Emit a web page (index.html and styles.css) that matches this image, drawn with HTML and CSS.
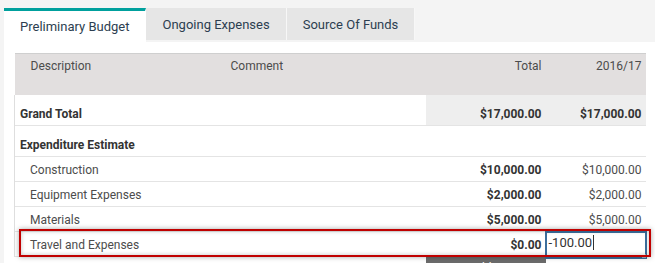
FILE: index.html
```html
<!DOCTYPE html>
<html>
<head>
<meta charset="utf-8">
<link rel="stylesheet" href="styles.css">
</head>
<body>
<div class="page">
  <div class="tabs">
    <div class="tab active">Preliminary Budget</div>
    <div class="tab">Ongoing Expenses</div>
    <div class="tab">Source Of Funds</div>
  </div>
  <div class="panel">
    <table class="grid">
      <colgroup>
        <col class="c-desc"><col class="c-comment"><col class="c-total"><col class="c-year">
      </colgroup>
      <thead>
        <tr>
          <th class="desc">Description</th>
          <th class="comment">Comment</th>
          <th class="num">Total</th>
          <th class="num">2016/17</th>
        </tr>
      </thead>
      <tbody>
        <tr class="group">
          <td class="g-label">Grand Total</td>
          <td></td>
          <td class="num shade">$17,000.00</td>
          <td class="num shade">$17,000.00</td>
        </tr>
        <tr class="group">
          <td class="g-label">Expenditure Estimate</td>
          <td></td><td></td><td></td>
        </tr>
        <tr class="line">
          <td class="l-label">Construction</td>
          <td></td>
          <td class="num bold">$10,000.00</td>
          <td class="num">$10,000.00</td>
        </tr>
        <tr class="line">
          <td class="l-label">Equipment Expenses</td>
          <td></td>
          <td class="num bold">$2,000.00</td>
          <td class="num">$2,000.00</td>
        </tr>
        <tr class="line">
          <td class="l-label">Materials</td>
          <td></td>
          <td class="num bold">$5,000.00</td>
          <td class="num">$5,000.00</td>
        </tr>
        <tr class="line editing">
          <td class="l-label">Travel and Expenses</td>
          <td></td>
          <td class="num bold">$0.00</td>
          <td class="edit-cell"><div class="input"><span>-100.00</span><i class="caret"></i><i class="grip"></i></div></td>
        </tr>
      </tbody>
      <tfoot>
        <tr>
          <td></td><td></td>
          <td class="btn-cell"><div class="btn">Add...</div></td>
          <td></td>
        </tr>
      </tfoot>
    </table>
    <div class="highlight"></div>
  </div>
</div>
</body>
</html>
```

FILE: styles.css
```css
* { box-sizing: border-box; }
html, body { margin: 0; padding: 0; }
body {
  width: 655px;
  height: 263px;
  overflow: hidden;
  background: #f4f4f4;
  font-family: Roboto, "Liberation Sans", sans-serif;
  color: #4c4c4c;
}
.page { padding-top: 8px; }
.tabs {
  display: flex;
  padding-left: 4px;
  height: 34px;
}
.tab {
  height: 32px;
  padding: 1px 16px 0;
  display: flex;
  align-items: center;
  white-space: nowrap;
  font-size: 13px;
  color: #2c3e50;
  background: #e6e6e6;
  border-right: 1px solid #f7f7f7;
}
.tab.active {
  background: #fff;
  border-top: 3px solid #00a09d;
  height: 34px;
  padding-bottom: 1px;
  border-right: 1px solid #fff;
}
.panel {
  position: relative;
  background: #fff;
  margin-left: 4px;
  padding: 11px 0 0 10px;
  height: 230px;
}
.grid {
  border-collapse: collapse;
  width: 631px;
  table-layout: fixed;
  font-size: 12px;
}
.c-desc { width: 200px; }
.c-comment { width: 211px; }
.c-total { width: 120px; }
.c-year { width: 100px; }
.grid thead tr {
  background: #e2dfdf;
  border-top: 1px solid #cfcfcf;
  height: 41px;
}
.grid th {
  font-weight: normal;
  text-align: left;
  vertical-align: top;
  padding: 5px 4px 0 16px;
  color: #4c4c4c;
}
.grid th.num { text-align: right; padding-right: 4px; }
.grid td { padding: 0 4px; white-space: nowrap; }
.grid tbody tr { border-bottom: 1px solid #e4e4e4; }
.grid tbody td:first-child { border-left: 1px solid #dedede; }
.group { height: 31px; }
.group td { vertical-align: bottom; padding-bottom: 4px; }
.g-label { font-weight: bold; color: #333; padding-left: 5px !important; }
.line { height: 25px; }
.line td { padding-top: 1px; }
.l-label { padding-left: 15px !important; color: #4c4c4c; }
.num { text-align: right; }
.bold { font-weight: bold; color: #333; }
.shade { background: #eeeeee; font-weight: bold; color: #333; }
.edit-cell { position: relative; }
.input {
  position: absolute;
  left: -1px;
  top: -1px;
  width: 102px;
  height: 28px;
  border: 2px solid #3b6e9c;
  background: #fff;
  font-size: 13px;
  color: #333;
  padding: 2px 0 0 2px;
  display: flex;
  align-items: flex-start;
}
.caret {
  display: inline-block;
  width: 1px;
  height: 15px;
  background: #333;
  margin-left: 1px;
}
.grip {
  position: absolute;
  right: -1px;
  bottom: -1px;
  width: 4px;
  height: 4px;
  border-right: 1px solid #9db3c8;
  border-bottom: 1px solid #9db3c8;
}
.btn-cell { padding: 0 !important; }
.btn {
  height: 28px;
  background: #6b6b6b;
  color: #fff;
  font-size: 12px;
  text-align: center;
  padding-top: 4px;
}
.highlight {
  position: absolute;
  left: 15px;
  top: 187px;
  width: 632px;
  height: 28px;
  border: 2px solid #c00000;
  box-shadow: 0 0 5px rgba(0,0,0,0.35), inset 0 0 4px rgba(0,0,0,0.25);
  pointer-events: none;
}
```
